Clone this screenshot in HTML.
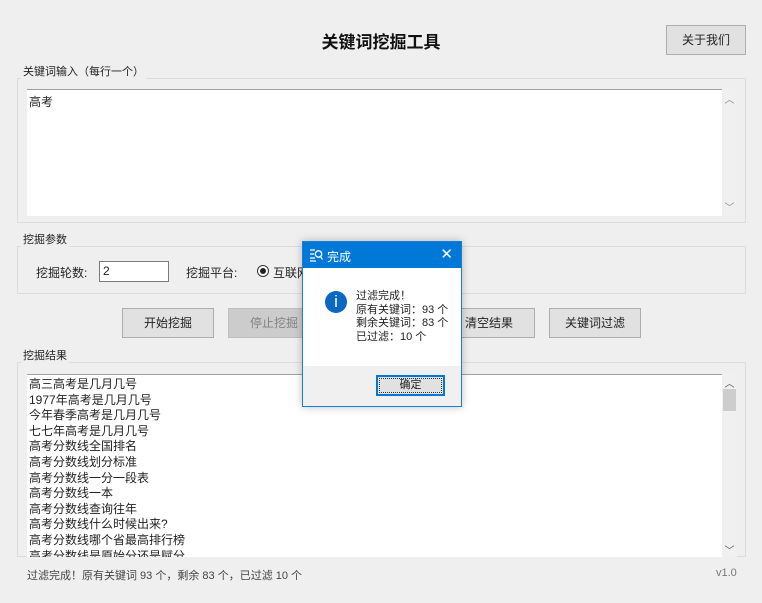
<!DOCTYPE html>
<html><head><meta charset="utf-8"><style>
*{box-sizing:border-box;margin:0;padding:0}
body{width:762px;height:603px;background:#efefef;font-family:"Liberation Sans","Noto Sans CJK SC",sans-serif;font-size:11px;color:#222;position:relative;overflow:hidden}
.a{position:absolute}
.grp{position:absolute;border:1px solid #dcdcdc}
.lbl{position:absolute;background:#efefef;padding:0 2px;font-size:11px;line-height:13px}
.btn{position:absolute;background:#e1e1e1;border:1px solid #adadad;font-size:12px;text-align:center}
.ta{position:absolute;background:#fff;border-top:1px solid #a0a0a0;font-size:12px}
.sb{position:absolute;background:#f0f0f0;color:#888;font-size:10px;text-align:center}
</style></head><body>
<div class="a" style="left:0;width:762px;top:28px;text-align:center;font-size:17px;font-weight:bold;color:#111">关键词挖掘工具</div>
<div class="btn" style="left:666px;top:25px;width:80px;height:30px;line-height:28px">关于我们</div>

<div class="grp" style="left:17px;top:78px;width:729px;height:145px"></div>
<div class="lbl" style="left:21px;top:66px">关键词输入（每行一个）</div>
<div class="ta" style="left:27px;top:89px;width:695px;height:127px;padding:3px 2px">高考</div>
<div class="sb" style="left:722px;top:89px;width:15px;height:127px"><div style="margin-top:2px">︿</div><div style="position:absolute;bottom:2px;width:15px">﹀</div></div>

<div class="grp" style="left:17px;top:246px;width:729px;height:48px"></div>
<div class="lbl" style="left:21px;top:234px">挖掘参数</div>
<div class="a" style="left:36px;top:264px;font-size:12px">挖掘轮数:</div>
<div class="a" style="left:99px;top:261px;width:70px;height:21px;background:#fff;border:1px solid #7a7a7a;font-size:12px;padding:2px 3px">2</div>
<div class="a" style="left:186px;top:264px;font-size:12px">挖掘平台:</div>
<div class="a" style="left:257px;top:265px;width:12px;height:12px;border:1px solid #333;border-radius:50%;background:#fff"><div style="margin:2px;width:6px;height:6px;border-radius:50%;background:#222"></div></div>
<div class="a" style="left:273px;top:264px;font-size:12px">互联网</div>

<div class="btn" style="left:122px;top:308px;width:92px;height:30px;line-height:28px">开始挖掘</div>
<div class="btn" style="left:228px;top:308px;width:92px;height:30px;line-height:28px;background:#cccccc;border-color:#bfbfbf;color:#838383">停止挖掘</div>
<div class="btn" style="left:335px;top:308px;width:92px;height:30px;line-height:28px">导出结果</div>
<div class="btn" style="left:443px;top:308px;width:92px;height:30px;line-height:28px">清空结果</div>
<div class="btn" style="left:549px;top:308px;width:92px;height:30px;line-height:28px">关键词过滤</div>

<div class="grp" style="left:17px;top:362px;width:729px;height:195px"></div>
<div class="lbl" style="left:21px;top:350px">挖掘结果</div>
<div class="ta" style="left:27px;top:374px;width:695px;height:183px;padding:2px 2px;line-height:15.6px;overflow:hidden;border-top:1px solid #a0a0a0">高三高考是几月几号<br>1977年高考是几月几号<br>今年春季高考是几月几号<br>七七年高考是几月几号<br>高考分数线全国排名<br>高考分数线划分标准<br>高考分数线一分一段表<br>高考分数线一本<br>高考分数线查询往年<br>高考分数线什么时候出来?<br>高考分数线哪个省最高排行榜<br>高考分数线是原始分还是赋分</div>
<div class="sb" style="left:722px;top:374px;width:15px;height:183px;color:#555"><div style="margin-top:1px">︿</div><div style="position:absolute;top:15px;left:1px;width:13px;height:22px;background:#cdcdcd"></div><div style="position:absolute;bottom:0;width:15px">﹀</div></div>

<div class="a" style="left:27px;top:567px;color:#444">过滤完成！原有关键词 93 个，剩余 83 个，已过滤 10 个</div>
<div class="a" style="left:716px;top:567px;color:#777">v1.0</div>

<div class="a" style="left:302px;top:241px;width:160px;height:166px;border:1px solid #1a7fd4;background:#f0f0f0;box-shadow:0 0 8px rgba(0,0,0,.25)">
 <div style="height:26px;background:#0078d7;color:#fff;font-size:12px;position:relative">
  <svg class="a" style="left:6px;top:6px" width="14" height="14" viewBox="0 0 14 14" fill="none" stroke="#fff" stroke-width="1.3"><path d="M1 2h5M1 6h4M1 10h5M1 13h6"/><circle cx="9.5" cy="6" r="3.2"/><path d="M11.5 8.5l2 3"/></svg>
  <span class="a" style="left:24px;top:6px">完成</span>
  <span class="a" style="right:8px;top:3px;font-size:15px">✕</span>
 </div>
 <div style="height:98px;background:#fff;position:relative">
  <div class="a" style="left:22px;top:23px;width:22px;height:22px;border-radius:50%;background:#0a67c2;color:#fff;text-align:center;font-size:17px;line-height:22px;font-family:'Liberation Sans'">i</div>
  <div class="a" style="left:53px;top:22px;line-height:13.5px;font-size:11px;color:#222">过滤完成！<br>原有关键词：93 个<br>剩余关键词：83 个<br>已过滤：10 个</div>
 </div>
 <div class="a" style="left:73px;top:133px;width:69px;height:21px;border:2px solid #0078d7;background:#e1e1e1;text-align:center;line-height:17px;font-size:11px"><div style="border:1px dotted #333;margin:1px;line-height:13px">确定</div></div>
</div>
</body></html>
